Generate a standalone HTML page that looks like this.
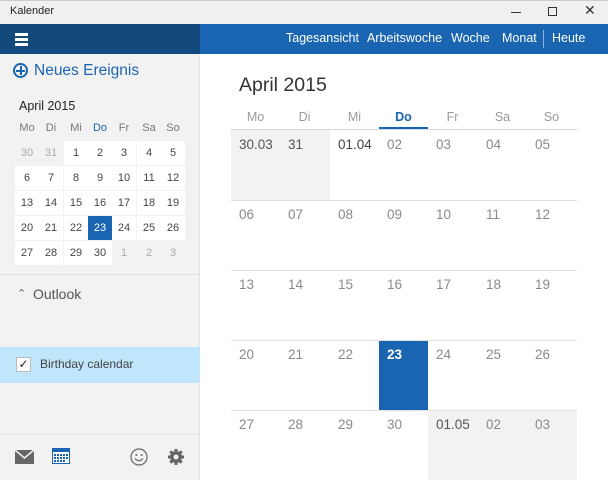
<!DOCTYPE html>
<html><head><meta charset="utf-8"><style>
*{margin:0;padding:0;box-sizing:border-box}
body{width:608px;height:480px;overflow:hidden;position:relative;font-family:"Segoe UI","Liberation Sans",sans-serif;background:#fff;color:#333}
.a{position:absolute}
.tb{left:0;top:0;width:608px;height:24px;background:#f0f0f0;border-top:1px solid #c8cdd4}
.nav{left:0;top:24px;width:200px;height:30px;background:#124a7c}
.bar{left:200px;top:24px;width:408px;height:30px;background:#1a65b1;color:#fff;font-size:12.5px}
.side{left:0;top:54px;width:200px;height:426px;background:#f2f2f2;border-right:1px solid #e2e2e2}
.m{width:24px;height:24px;text-align:center;line-height:24px;font-size:11px;color:#444}
.mw{background:#fff}
.g{color:#aaa}
.c{width:49px;height:70px;font-size:13.5px;color:#8a8a8a;padding:7px 0 0 8px}
.hl{height:1px;background:#e0e0e0;left:231px;width:346px}
.dh{font-size:12.5px;color:#999;width:49px;text-align:center;top:110px}
</style></head><body>
<div class="a tb"><span class="a" style="left:10px;top:4px;font-size:11px;color:#222">Kalender</span>
<span class="a" style="left:511px;top:11px;width:10px;height:1px;background:#333"></span>
<span class="a" style="left:548px;top:6px;width:9px;height:9px;border:1px solid #333"></span>
<span class="a" style="left:584px;top:1px;font-size:14px;color:#333">✕</span></div>
<div class="a nav"><span class="a" style="left:15px;top:9px;width:13px;height:2.5px;background:#fff;box-shadow:0 5px 0 #fff,0 10px 0 #fff"></span></div>
<div class="a bar">
<span class="a" style="left:86px;top:7px">Tagesansicht</span>
<span class="a" style="left:167px;top:7px">Arbeitswoche</span>
<span class="a" style="left:251px;top:7px">Woche</span>
<span class="a" style="left:302px;top:7px">Monat</span>
<span class="a" style="left:343px;top:6px;width:1px;height:18px;background:#8fb3dc"></span>
<span class="a" style="left:352px;top:7px">Heute</span></div>
<div class="a side">
<span class="a" style="left:13px;top:9px;width:15px;height:15px;border:2px solid #1a65b1;border-radius:50%"></span>
<span class="a" style="left:16px;top:15.5px;width:9px;height:2px;background:#1a65b1"></span>
<span class="a" style="left:19.5px;top:12px;width:2px;height:9px;background:#1a65b1"></span>
<span class="a" style="left:34px;top:8px;font-size:15.5px;color:#1a65b1">Neues Ereignis</span>
<span class="a" style="left:19px;top:45px;font-size:12.5px;color:#222">April 2015</span>
</div>
<div class="a" style="left:15px;top:122px;width:170px;font-size:11px;color:#777">
<span class="a" style="left:0;width:24px;text-align:center">Mo</span><span class="a" style="left:24px;width:24px;text-align:center">Di</span><span class="a" style="left:49px;width:24px;text-align:center">Mi</span><span class="a" style="left:73px;width:24px;text-align:center;color:#1a65b1">Do</span><span class="a" style="left:97px;width:24px;text-align:center">Fr</span><span class="a" style="left:122px;width:24px;text-align:center">Sa</span><span class="a" style="left:146px;width:24px;text-align:center">So</span></div>
<div class="a" style="left:15px;top:141px">
<div class="a m g" style="left:0;top:0">30</div><div class="a m g" style="left:24px;top:0">31</div><div class="a m mw" style="left:49px;top:0">1</div><div class="a m mw" style="left:73px;top:0">2</div><div class="a m mw" style="left:97px;top:0">3</div><div class="a m mw" style="left:122px;top:0">4</div><div class="a m mw" style="left:146px;top:0">5</div>
<div class="a m mw" style="left:0;top:25px">6</div><div class="a m mw" style="left:24px;top:25px">7</div><div class="a m mw" style="left:49px;top:25px">8</div><div class="a m mw" style="left:73px;top:25px">9</div><div class="a m mw" style="left:97px;top:25px">10</div><div class="a m mw" style="left:122px;top:25px">11</div><div class="a m mw" style="left:146px;top:25px">12</div>
<div class="a m mw" style="left:0;top:50px">13</div><div class="a m mw" style="left:24px;top:50px">14</div><div class="a m mw" style="left:49px;top:50px">15</div><div class="a m mw" style="left:73px;top:50px">16</div><div class="a m mw" style="left:97px;top:50px">17</div><div class="a m mw" style="left:122px;top:50px">18</div><div class="a m mw" style="left:146px;top:50px">19</div>
<div class="a m mw" style="left:0;top:75px">20</div><div class="a m mw" style="left:24px;top:75px">21</div><div class="a m mw" style="left:49px;top:75px">22</div><div class="a m" style="left:73px;top:75px;background:#1a65b1;color:#fff">23</div><div class="a m mw" style="left:97px;top:75px">24</div><div class="a m mw" style="left:122px;top:75px">25</div><div class="a m mw" style="left:146px;top:75px">26</div>
<div class="a m mw" style="left:0;top:100px">27</div><div class="a m mw" style="left:24px;top:100px">28</div><div class="a m mw" style="left:49px;top:100px">29</div><div class="a m mw" style="left:73px;top:100px">30</div><div class="a m g" style="left:97px;top:100px">1</div><div class="a m g" style="left:122px;top:100px">2</div><div class="a m g" style="left:146px;top:100px">3</div>
</div>
<div class="a" style="left:0;top:274px;width:200px;height:1px;background:#e0e0e0"></div>
<span class="a" style="left:17px;top:287px;font-size:11px;color:#666">⌃</span>
<span class="a" style="left:33px;top:286px;font-size:14px;color:#555">Outlook</span>
<div class="a" style="left:0;top:347px;width:200px;height:36px;background:#bfe6fb"></div>
<div class="a" style="left:16px;top:357px;width:15px;height:15px;background:#fff;border:1px solid #bbb;font-size:12px;line-height:13px;text-align:center;color:#222">✓</div>
<span class="a" style="left:40px;top:357px;font-size:12px;color:#444">Birthday calendar</span>
<div class="a" style="left:0;top:434px;width:200px;height:1px;background:#e4e4e4"></div>
<svg class="a" style="left:15px;top:449px" width="19" height="16"><rect x="0" y="1" width="19" height="14" fill="#666"/><path d="M0 1 L9.5 9 L19 1" stroke="#f2f2f2" stroke-width="1.5" fill="none"/></svg>
<svg class="a" style="left:52px;top:448px" width="18" height="16"><rect x="0.5" y="0.5" width="17" height="15" fill="#fff" stroke="#1a65b1"/><rect x="0" y="0" width="18" height="4" fill="#1a65b1"/><g fill="#1a65b1"><rect x="2" y="6" width="2" height="2"/><rect x="5" y="6" width="2" height="2"/><rect x="8" y="6" width="2" height="2"/><rect x="11" y="6" width="2" height="2"/><rect x="14" y="6" width="2" height="2"/><rect x="2" y="9" width="2" height="2"/><rect x="5" y="9" width="2" height="2"/><rect x="8" y="9" width="2" height="2"/><rect x="11" y="9" width="2" height="2"/><rect x="14" y="9" width="2" height="2"/><rect x="2" y="12" width="2" height="2"/><rect x="5" y="12" width="2" height="2"/><rect x="8" y="12" width="2" height="2"/><rect x="11" y="12" width="2" height="2"/></g></svg>
<svg class="a" style="left:130px;top:448px" width="18" height="18"><circle cx="9" cy="9" r="8" fill="none" stroke="#666" stroke-width="1.2"/><circle cx="6.3" cy="7" r="1" fill="#666"/><circle cx="11.7" cy="7" r="1" fill="#666"/><path d="M5 10.5 Q9 15 13 10.5" stroke="#666" stroke-width="1.2" fill="none"/></svg>
<svg class="a" style="left:167px;top:448px" width="18" height="18" viewBox="0 0 18 18"><g fill="#666"><circle cx="9" cy="9" r="6"/><g stroke="#666" stroke-width="3"><path d="M9 1v16M1 9h16M3.3 3.3l11.4 11.4M14.7 3.3L3.3 14.7"/></g></g><circle cx="9" cy="9" r="2.5" fill="#f2f2f2"/></svg>
<span class="a" style="left:239px;top:74px;font-size:19.5px;color:#333">April 2015</span>
<span class="a dh" style="left:231px">Mo</span><span class="a dh" style="left:280px">Di</span><span class="a dh" style="left:330px">Mi</span><span class="a dh" style="left:379px;color:#1a65b1;font-weight:bold">Do</span><span class="a dh" style="left:428px">Fr</span><span class="a dh" style="left:478px">Sa</span><span class="a dh" style="left:527px">So</span>
<div class="a" style="left:379px;top:127px;width:49px;height:3px;background:#1a65b1"></div>
<div class="a" style="left:231px;top:130px;width:99px;height:70px;background:#f2f2f2"></div>
<div class="a" style="left:428px;top:410px;width:149px;height:70px;background:#f2f2f2"></div>
<div class="a" style="left:379px;top:340px;width:49px;height:70px;background:#1a65b1"></div>
<div class="a hl" style="top:129px;background:#d8d8d8"></div><div class="a hl" style="top:200px"></div><div class="a hl" style="top:270px"></div><div class="a hl" style="top:340px"></div><div class="a hl" style="top:410px"></div>
<div class="a" style="left:231px;top:130px">
<div class="a c" style="left:0;top:0;color:#555">30.03</div><div class="a c" style="left:49px;top:0;color:#555">31</div><div class="a c" style="left:99px;top:0;color:#444">01.04</div><div class="a c" style="left:148px;top:0">02</div><div class="a c" style="left:197px;top:0">03</div><div class="a c" style="left:247px;top:0">04</div><div class="a c" style="left:296px;top:0">05</div>
<div class="a c" style="left:0;top:70px">06</div><div class="a c" style="left:49px;top:70px">07</div><div class="a c" style="left:99px;top:70px">08</div><div class="a c" style="left:148px;top:70px">09</div><div class="a c" style="left:197px;top:70px">10</div><div class="a c" style="left:247px;top:70px">11</div><div class="a c" style="left:296px;top:70px">12</div>
<div class="a c" style="left:0;top:140px">13</div><div class="a c" style="left:49px;top:140px">14</div><div class="a c" style="left:99px;top:140px">15</div><div class="a c" style="left:148px;top:140px">16</div><div class="a c" style="left:197px;top:140px">17</div><div class="a c" style="left:247px;top:140px">18</div><div class="a c" style="left:296px;top:140px">19</div>
<div class="a c" style="left:0;top:210px">20</div><div class="a c" style="left:49px;top:210px">21</div><div class="a c" style="left:99px;top:210px">22</div><div class="a c" style="left:148px;top:210px;color:#fff;font-weight:bold">23</div><div class="a c" style="left:197px;top:210px">24</div><div class="a c" style="left:247px;top:210px">25</div><div class="a c" style="left:296px;top:210px">26</div>
<div class="a c" style="left:0;top:280px">27</div><div class="a c" style="left:49px;top:280px">28</div><div class="a c" style="left:99px;top:280px">29</div><div class="a c" style="left:148px;top:280px">30</div><div class="a c" style="left:197px;top:280px;color:#555">01.05</div><div class="a c" style="left:247px;top:280px">02</div><div class="a c" style="left:296px;top:280px">03</div>
</div>
</body></html>
